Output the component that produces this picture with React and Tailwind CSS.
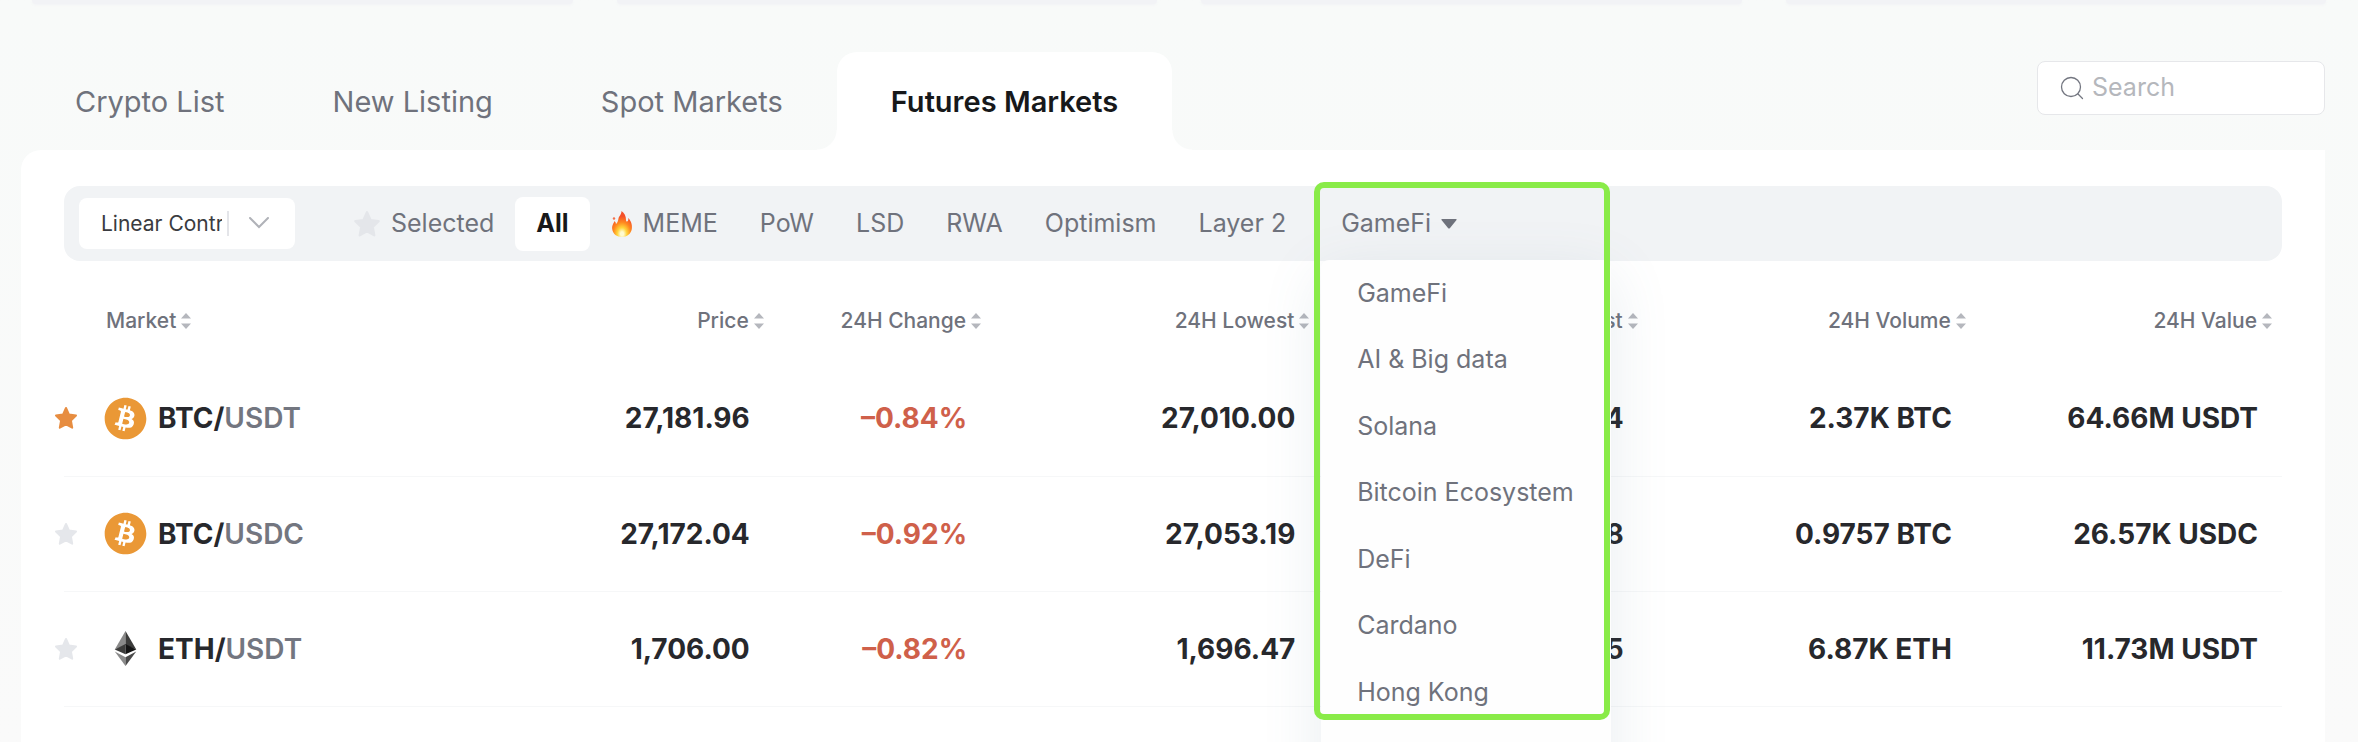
import { useState } from 'react';
import { FaBitcoin } from 'react-icons/fa';

const TABS = ['Crypto List', 'New Listing', 'Spot Markets', 'Futures Markets'];
const FILTERS = ['Selected', 'All', 'MEME', 'PoW', 'LSD', 'RWA', 'Optimism', 'Layer 2'];
const CATEGORIES = ['GameFi', 'AI & Big data', 'Solana', 'Bitcoin Ecosystem', 'DeFi', 'Cardano', 'Hong Kong'];

const COLUMNS = [
  { label: 'Market', width: 'w-[16%]' },
  { label: 'Price', width: 'w-[16%]' },
  { label: '24H Change', width: 'w-[9.8%]' },
  { label: '24H Lowest', width: 'w-[14.8%]' },
  { label: '24H Highest', width: 'w-[14.8%]' },
  { label: '24H Volume', width: 'w-[14.8%]' },
  { label: '24H Value', width: 'w-[13.8%]' },
];

const MARKETS = [
  { base: 'BTC', quote: 'USDT', starred: true, price: '27,181.96', change: '–0.84%', low: '27,010.00', high: '27,455.84', volume: '2.37K BTC', value: '64.66M USDT' },
  { base: 'BTC', quote: 'USDC', starred: false, price: '27,172.04', change: '–0.92%', low: '27,053.19', high: '27,448.38', volume: '0.9757 BTC', value: '26.57K USDC' },
  { base: 'ETH', quote: 'USDT', starred: false, price: '1,706.00', change: '–0.82%', low: '1,696.47', high: '1,727.15', volume: '6.87K ETH', value: '11.73M USDT' },
];

const Star = ({ className }) => (
  <svg viewBox="0 0 24 24" className={className} fill="currentColor" stroke="currentColor" strokeWidth="2" strokeLinejoin="round" aria-hidden="true">
    <path d="M12 2l3 6.600 7 .9-5.100 5 1.300 7.200L12 18.300l-6.200 3.400 1.300-7.200L2 9.500l7-.9z" />
  </svg>
);

const Flame = () => (
  <svg viewBox="0 0 22 26" className="h-[26px] w-[22px]" aria-hidden="true">
    <defs>
      <radialGradient id="flame" cx="0.5" cy="0.88" r="0.8">
        <stop offset="0.1" stopColor="#fffbd0" />
        <stop offset="0.3" stopColor="#ffd43b" />
        <stop offset="0.55" stopColor="#ff8a1f" />
        <stop offset="0.85" stopColor="#f4502a" />
      </radialGradient>
    </defs>
    <path
      d="M10.500 0c3 2 4.500 5 4.500 9 0 1 .5 1.500 1 1.500 1 0 1.500-1.500 1.300-3.500 2.500 2.500 4.200 6.500 3.500 11-.8 4.800-4.800 8-9.800 8s-9.300-3-9.800-8C.8 14 3 12 3.500 10c1 1 1.500 2 1.500 3 1.500-1 2-3 2.500-5.500C8 5 10.500 3.500 10.500 0z"
      fill="url(#flame)"
    />
    <circle cx="3" cy="7.500" r="1.200" fill="#f4704a" />
  </svg>
);

const SortIcon = () => (
  <svg viewBox="0 0 10 16" className="h-4 w-[10px]" fill="#b5b7bd" aria-hidden="true">
    <path d="M5 0l5 5.500H0zM5 16l5-5.500H0z" />
  </svg>
);

const EthLogo = () => (
  <svg viewBox="0 0 44 44" className="size-[43px]" aria-hidden="true">
    <path d="M22 4v14.500L11 23z" fill="#8a8a8a" />
    <path d="M22 4v14.500L33 23z" fill="#3c3c3b" />
    <path d="M22 17.500V28l-11-5z" fill="#3c3c3b" />
    <path d="M22 17.500V28l11-5z" fill="#141414" />
    <path d="M22 31v9L11 25z" fill="#8a8a8a" />
    <path d="M22 31v9l11-15z" fill="#4a4a4a" />
  </svg>
);

const App = () => {
  const [activeTab, setActiveTab] = useState('Futures Markets');
  const [activeFilter, setActiveFilter] = useState('All');
  const [search, setSearch] = useState('');

  return (
    <div className="h-screen overflow-hidden bg-linear-to-b from-[#f8faf9] to-[#fafafa] font-['Inter',sans-serif] text-[#6f727c]">
      {/* Bottom edge of the cards above */}
      <div className="grid grid-cols-4 gap-11 px-8">
        {[0, 1, 2, 3].map((card) => (
          <div key={card} className="h-1 rounded-b bg-[#f2f3f6] shadow-[0_1px_3px_#f2f3f6]" />
        ))}
      </div>

      <div className="pl-[21px] pr-[33px]">
        {/* Tabs and search */}
        <div className="mt-12 flex h-[98px] items-start justify-between">
          <nav className="flex h-full">
            {TABS.map((tab) => (
              <button
                key={tab}
                onClick={() => setActiveTab(tab)}
                className={`relative h-full px-[54px] pt-[2px] text-[29px] ${
                  activeTab === tab ? 'rounded-t-[20px] bg-white font-semibold text-[#17181a]' : ''
                }`}
              >
                {tab}
                {activeTab === tab && (
                  <>
                    <span className="absolute bottom-0 right-full size-5 bg-radial-[at_0%_0%] from-transparent from-[19px] to-white to-[20px]" />
                    <span className="absolute bottom-0 left-full size-5 bg-radial-[at_100%_0%] from-transparent from-[19px] to-white to-[20px]" />
                  </>
                )}
              </button>
            ))}
          </nav>
          <label className="mt-[9px] flex h-[54px] w-72 items-center gap-2 rounded-lg border border-[#e6e7ea] bg-white pl-[22px]">
            <svg viewBox="0 0 24 24" className="size-6 shrink-0" fill="none" stroke="#737680" strokeWidth="1.300" strokeLinecap="round" aria-hidden="true">
              <circle cx="11" cy="11" r="9.500" />
              <path d="M18 18l4.500 4.500" />
            </svg>
            <input
              value={search}
              onChange={(e) => setSearch(e.target.value)}
              aria-label="Search"
              placeholder="Search"
              className="w-full min-w-0 bg-transparent text-[25px] outline-none placeholder:text-[#b5b7bc]"
            />
          </label>
        </div>

        <div className="h-screen rounded-tl-[20px] bg-white px-[43px] pt-9">
          {/* Filter bar */}
          <div className="flex h-[75px] items-center rounded-2xl bg-[#f1f3f5] pl-[15px] text-[25px]">
            <div className="relative mr-[37px] h-[51px] w-[216px] shrink-0">
              <select
                aria-label="Contract type"
                className="h-full w-full appearance-none overflow-hidden rounded-lg bg-white pl-[22px] pr-[73px] text-[21px] text-clip text-[#3a3b40]"
              >
                <option>Linear Contracts</option>
                <option>Inverse Contracts</option>
              </select>
              <span className="pointer-events-none absolute right-[66px] top-[13px] h-[25px] w-[2px] bg-[#e4e5e9]" />
              <svg viewBox="0 0 20 12" className="pointer-events-none absolute right-[26px] top-[19px] h-3 w-5" fill="none" stroke="#b0b2b8" strokeWidth="2" strokeLinecap="round" aria-hidden="true">
                <path d="M1 1l9 9 9-9" />
              </svg>
            </div>
            {FILTERS.map((filter) => (
              <button
                key={filter}
                onClick={() => setActiveFilter(filter)}
                className={`flex h-[54px] shrink-0 items-center gap-[10px] rounded-lg px-[21px] ${
                  activeFilter === filter ? 'bg-white font-bold text-[#17181a]' : ''
                }`}
              >
                {filter === 'Selected' && <Star className="size-7 text-[#e4e6ea]" />}
                {filter === 'MEME' && <Flame />}
                {filter}
              </button>
            ))}
            <div className="relative ml-[14px] h-full">
              <button className="flex h-full items-center gap-[10px] px-5">
                GameFi
                <svg viewBox="0 0 16 10" className="h-[10px] w-4" fill="currentColor" aria-hidden="true">
                  <path d="M1 0h14q1 0 .5 1L9 9q-1 1-2 0L.5 1Q0 0 1 0z" />
                </svg>
              </button>
              <div className="absolute left-0 top-[74px] w-[290px] rounded-lg bg-[#fefefe] shadow-[0_16px_60px_rgba(90,130,150,0.14)]">
                <ul className="flex h-[466px] flex-col">
                  {CATEGORIES.map((category) => (
                    <li key={category} className="flex-1">
                      <button className="h-full w-full px-9 text-left whitespace-nowrap">{category}</button>
                    </li>
                  ))}
                </ul>
                <div className="h-32" />
              </div>
              <div className="pointer-events-none absolute -left-[7px] -top-[4px] h-[538px] w-[296px] rounded-[10px] border-6 border-[#89eb48]" />
            </div>
          </div>

          {/* Markets table */}
          <table className="w-full table-fixed">
            <thead>
              <tr className="h-[100px] text-[21px]">
                {COLUMNS.map((col, idx) => (
                  <th key={col.label} className={`font-medium ${col.width} ${idx === 0 ? 'pl-[42px]' : 'pr-[10px]'}`}>
                    <button className={`flex w-full items-center gap-[5px] pt-5 ${idx === 0 ? 'justify-start' : 'justify-end'}`}>
                      {col.label}
                      <SortIcon />
                    </button>
                  </th>
                ))}
              </tr>
            </thead>
            <tbody>
              {MARKETS.map((row) => (
                <tr key={row.base + row.quote} className="h-[115px] border-b border-[#f6f7f8] text-right text-[28px] font-bold text-[#27282c]">
                  <td>
                    <div className="-ml-[10px] flex items-center">
                      <button aria-label="Toggle favourite" className={row.starred ? 'text-[#e78d41]' : 'text-[#e5e7eb]'}>
                        <Star className="size-6" />
                      </button>
                      <span className="ml-[26px]">
                        {row.base === 'BTC' ? <FaBitcoin className="size-[43px] text-[#ea9836]" /> : <EthLogo />}
                      </span>
                      <span className="ml-[11px]">
                        {row.base}/<span className="font-semibold text-[#737680]">{row.quote}</span>
                      </span>
                    </div>
                  </td>
                  <td className="pr-6">{row.price}</td>
                  <td className="pr-6 text-[#cf604a]">{row.change}</td>
                  <td className="pr-6">{row.low}</td>
                  <td className="pr-6">{row.high}</td>
                  <td className="pr-6">{row.volume}</td>
                  <td className="pr-6">{row.value}</td>
                </tr>
              ))}
            </tbody>
          </table>
        </div>
      </div>
    </div>
  );
};

export default App;
